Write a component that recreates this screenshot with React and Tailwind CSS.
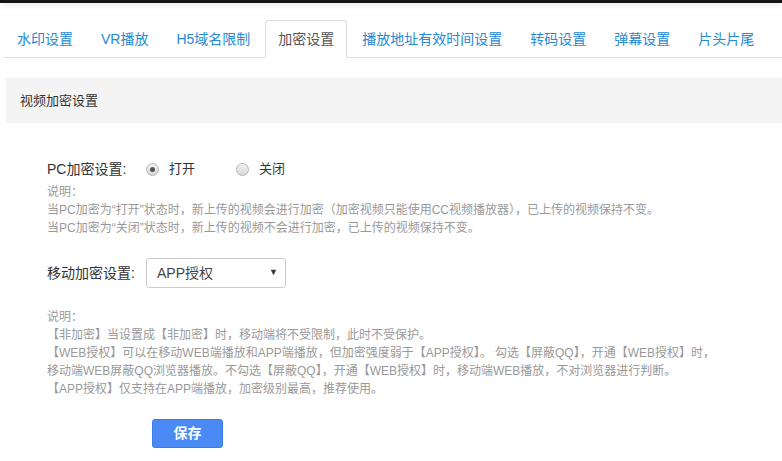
const tabs = ["水印设置", "VR播放", "H5域名限制", "加密设置", "播放地址有效时间设置", "转码设置", "弹幕设置", "片头片尾"];
const active = "加密设置";

function Radio({ checked }) {
  return (
    <span className="w-[13px] h-[13px] rounded-full border border-[#b5b5b5] bg-gradient-to-b from-[#f2f2f2] to-[#d8d8d8] flex items-center justify-center">
      {checked && <span className="w-[5px] h-[5px] rounded-full bg-[#555]" />}
    </span>
  );
}

export default function App() {
  return (
    <div className="w-[782px] h-[461px] overflow-hidden bg-white font-['Liberation_Sans','Noto_Sans_CJK_SC',sans-serif] text-[#333]">
      <div className="h-[3px] bg-[#141414] shadow-[0_1px_7px_rgba(0,0,0,0.18)]" />

      <ul className="mt-[17px] ml-[4px] flex border-b border-[#ddd]">
        {tabs.map((t) => (
          <li
            key={t}
            className={
              t === active
                ? "h-[38px] -mb-px mr-[2px] px-[12px] flex items-center text-[14px] text-[#555] bg-white border border-[#ddd] border-b-white rounded-t-[4px]"
                : "h-[38px] -mb-px mr-[2px] px-[12px] flex items-center text-[14px] text-[#2589d4] border border-transparent"
            }
          >
            {t}
          </li>
        ))}
      </ul>

      <div className="mt-[20px] ml-[6px] h-[45px] bg-[#f4f4f4] px-[14px] flex items-center text-[13px] text-[#333]">
        视频加密设置
      </div>

      <div className="pl-[47px]">
        <div className="mt-[36px] h-[20px] flex items-center text-[14px]">
          <span className="w-[99px]">PC加密设置:</span>
          <label className="flex items-center">
            <Radio checked />
            <span className="ml-[10px] text-[13px]">打开</span>
          </label>
          <label className="flex items-center ml-[41px]">
            <Radio />
            <span className="ml-[10px] text-[13px]">关闭</span>
          </label>
        </div>

        <div className="mt-[4px] text-[12px] leading-[18px] text-[#999]">
          <p>说明：</p>
          <p>当PC加密为“打开”状态时，新上传的视频会进行加密（加密视频只能使用CC视频播放器），已上传的视频保持不变。</p>
          <p>当PC加密为“关闭”状态时，新上传的视频不会进行加密，已上传的视频保持不变。</p>
        </div>

        <div className="mt-[21px] flex items-center text-[14px]">
          <span className="w-[99px]">移动加密设置:</span>
          <div className="w-[140px] h-[30px] border border-[#ccc] rounded-[3px] flex items-center justify-between pl-[10px] pr-[7px]">
            <span className="text-[14px] text-[#444]">APP授权</span>
            <span className="text-[9px] text-[#333]">▼</span>
          </div>
        </div>

        <div className="mt-[20px] text-[12px] leading-[18px] text-[#999]">
          <p>说明：</p>
          <p>【非加密】当设置成【非加密】时，移动端将不受限制，此时不受保护。</p>
          <p>【WEB授权】可以在移动WEB端播放和APP端播放，但加密强度弱于【APP授权】。 勾选【屏蔽QQ】，开通【WEB授权】时，</p>
          <p>移动端WEB屏蔽QQ浏览器播放。不勾选【屏蔽QQ】，开通【WEB授权】时，移动端WEB播放，不对浏览器进行判断。</p>
          <p>【APP授权】仅支持在APP端播放，加密级别最高，推荐使用。</p>
        </div>

        <button className="mt-[21px] ml-[105px] w-[71px] h-[29px] rounded-[3px] bg-[#4a8af4] border border-[#3b7be6] text-white text-[14px] font-bold flex items-center justify-center">
          保存
        </button>
      </div>
    </div>
  );
}
